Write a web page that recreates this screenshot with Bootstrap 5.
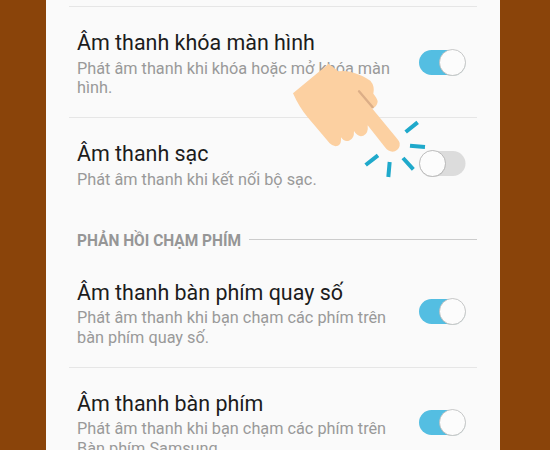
<!DOCTYPE html>
<html lang="vi">
<head>
    <meta charset="UTF-8">
    <title>Âm thanh</title>
    <!-- Bootstrap CSS -->
    <link href="https://cdn.jsdelivr.net/npm/bootstrap@5.3.0/dist/css/bootstrap.min.css" rel="stylesheet">
    <style>
        body {
            background-color: #8a440a;
            font-family: Roboto, "Noto Sans", sans-serif;
            height: 450px;
            overflow: hidden;
        }

        .phone {
            width: 454px;
            height: 450px;
            margin-left: 46px;
            padding: 6px 23px 0;
            background-color: #fafafa;
        }

        .setting {
            padding: 23px 11px 19.5px 8px;
            border-top: 1px solid #e6e6e6;
        }

        .setting.first-in-group {
            border-top-color: transparent;
        }

        .setting-title {
            font-size: 21.45px;
            line-height: 26px;
            color: #1c1c1c;
        }

        .setting-text {
            width: 325px;
            margin-top: 2.5px;
            font-size: 16.27px;
            line-height: 19.5px;
            color: #999;
        }

        .group-head {
            height: 47px;
            padding: 21px 0 0 8px;
        }

        .group-name {
            width: 164px;
            font-size: 17px;
            line-height: 20px;
            font-weight: 700;
            color: #969696;
        }

        .group-name span {
            display: inline-block;
            transform: scaleX(.91);
            transform-origin: left;
        }

        .group-line {
            height: 1px;
            margin-left: 8px;
            background-color: #ccc;
        }

        .toggle {
            width: 47px;
            height: 27px;
            margin-bottom: 3px;
        }

        /* pointing hand over the second switch */
        .hand {
            left: 280px;
            top: 50px;
        }
    </style>
</head>
<body>

<svg width="0" height="0" class="position-absolute">
    <symbol id="toggle-on" viewBox="0 0 47 27">
        <rect x="0" y="1" width="46" height="25" rx="12.5" fill="#54bee2"/>
        <circle cx="33.5" cy="14" r="13.2" fill="#8aa" opacity=".45"/>
        <circle cx="33.5" cy="13.5" r="13" fill="#fcfcfc" stroke="#bbb" stroke-width=".8"/>
    </symbol>
    <symbol id="toggle-off" viewBox="0 0 47 27">
        <rect x="1" y="1" width="45.5" height="25" rx="12.5" fill="#dcdcdc"/>
        <circle cx="13.5" cy="13.8" r="13.2" fill="#999" opacity=".5"/>
        <circle cx="13.5" cy="13.5" r="13" fill="#fcfcfc" stroke="#b0b0b0" stroke-width=".8"/>
    </symbol>
</svg>

<main class="phone overflow-hidden">
    <div class="setting d-flex align-items-center justify-content-between">
        <div>
            <div class="setting-title">Âm thanh khóa màn hình</div>
            <div class="setting-text">Phát âm thanh khi khóa hoặc mở khóa màn<br>hình.</div>
        </div>
        <svg class="toggle flex-shrink-0"><use href="#toggle-on"/></svg>
    </div>
    <div class="setting d-flex align-items-center justify-content-between">
        <div>
            <div class="setting-title">Âm thanh sạc</div>
            <div class="setting-text">Phát âm thanh khi kết nối bộ sạc.</div>
        </div>
        <svg class="toggle flex-shrink-0"><use href="#toggle-off"/></svg>
    </div>

    <div class="group-head d-flex align-items-start">
        <div class="d-flex align-items-center w-100">
            <div class="group-name text-nowrap flex-shrink-0"><span>PHẢN HỒI CHẠM PHÍM</span></div>
            <div class="group-line flex-grow-1"></div>
        </div>
    </div>

    <div class="setting first-in-group d-flex align-items-center justify-content-between">
        <div>
            <div class="setting-title">Âm thanh bàn phím quay số</div>
            <div class="setting-text">Phát âm thanh khi bạn chạm các phím trên<br>bàn phím quay số.</div>
        </div>
        <svg class="toggle flex-shrink-0"><use href="#toggle-on"/></svg>
    </div>
    <div class="setting d-flex align-items-center justify-content-between">
        <div>
            <div class="setting-title">Âm thanh bàn phím</div>
            <div class="setting-text">Phát âm thanh khi bạn chạm các phím trên<br>Bàn phím Samsung.</div>
        </div>
        <svg class="toggle flex-shrink-0"><use href="#toggle-on"/></svg>
    </div>
</main>

<svg class="hand position-absolute" width="200" height="140" viewBox="0 0 600 420">
    <path fill="#fcd0a1" d="M146 41L39 130Q57 171 83 202L149 280Q161 292 174 287Q185 282 183 262Q192 276 207 272Q223 267 222 243Q234 263 250 257Q266 251 263 226L315 292Q328 309 345 304Q361 296 359 279Q357 272 349 263L276 175Q291 170 293 155Q293 147 280 131Q285 108 271 92Q245 74 211 65Q193 61 175 64Z"/>
    <path d="M237 124L278 172" stroke="#dcae87" stroke-width="7" stroke-linecap="round"/>
    <path d="M377 246L413 217M390 287L435 291M369 324L400 358M329 336L325 381M294 316L257 345" stroke="#1fa9cb" stroke-width="12" fill="none"/>
</svg>

<!-- Bootstrap JS -->
<script src="https://cdn.jsdelivr.net/npm/bootstrap@5.3.0/dist/js/bootstrap.bundle.min.js"></script>
</body>
</html>
